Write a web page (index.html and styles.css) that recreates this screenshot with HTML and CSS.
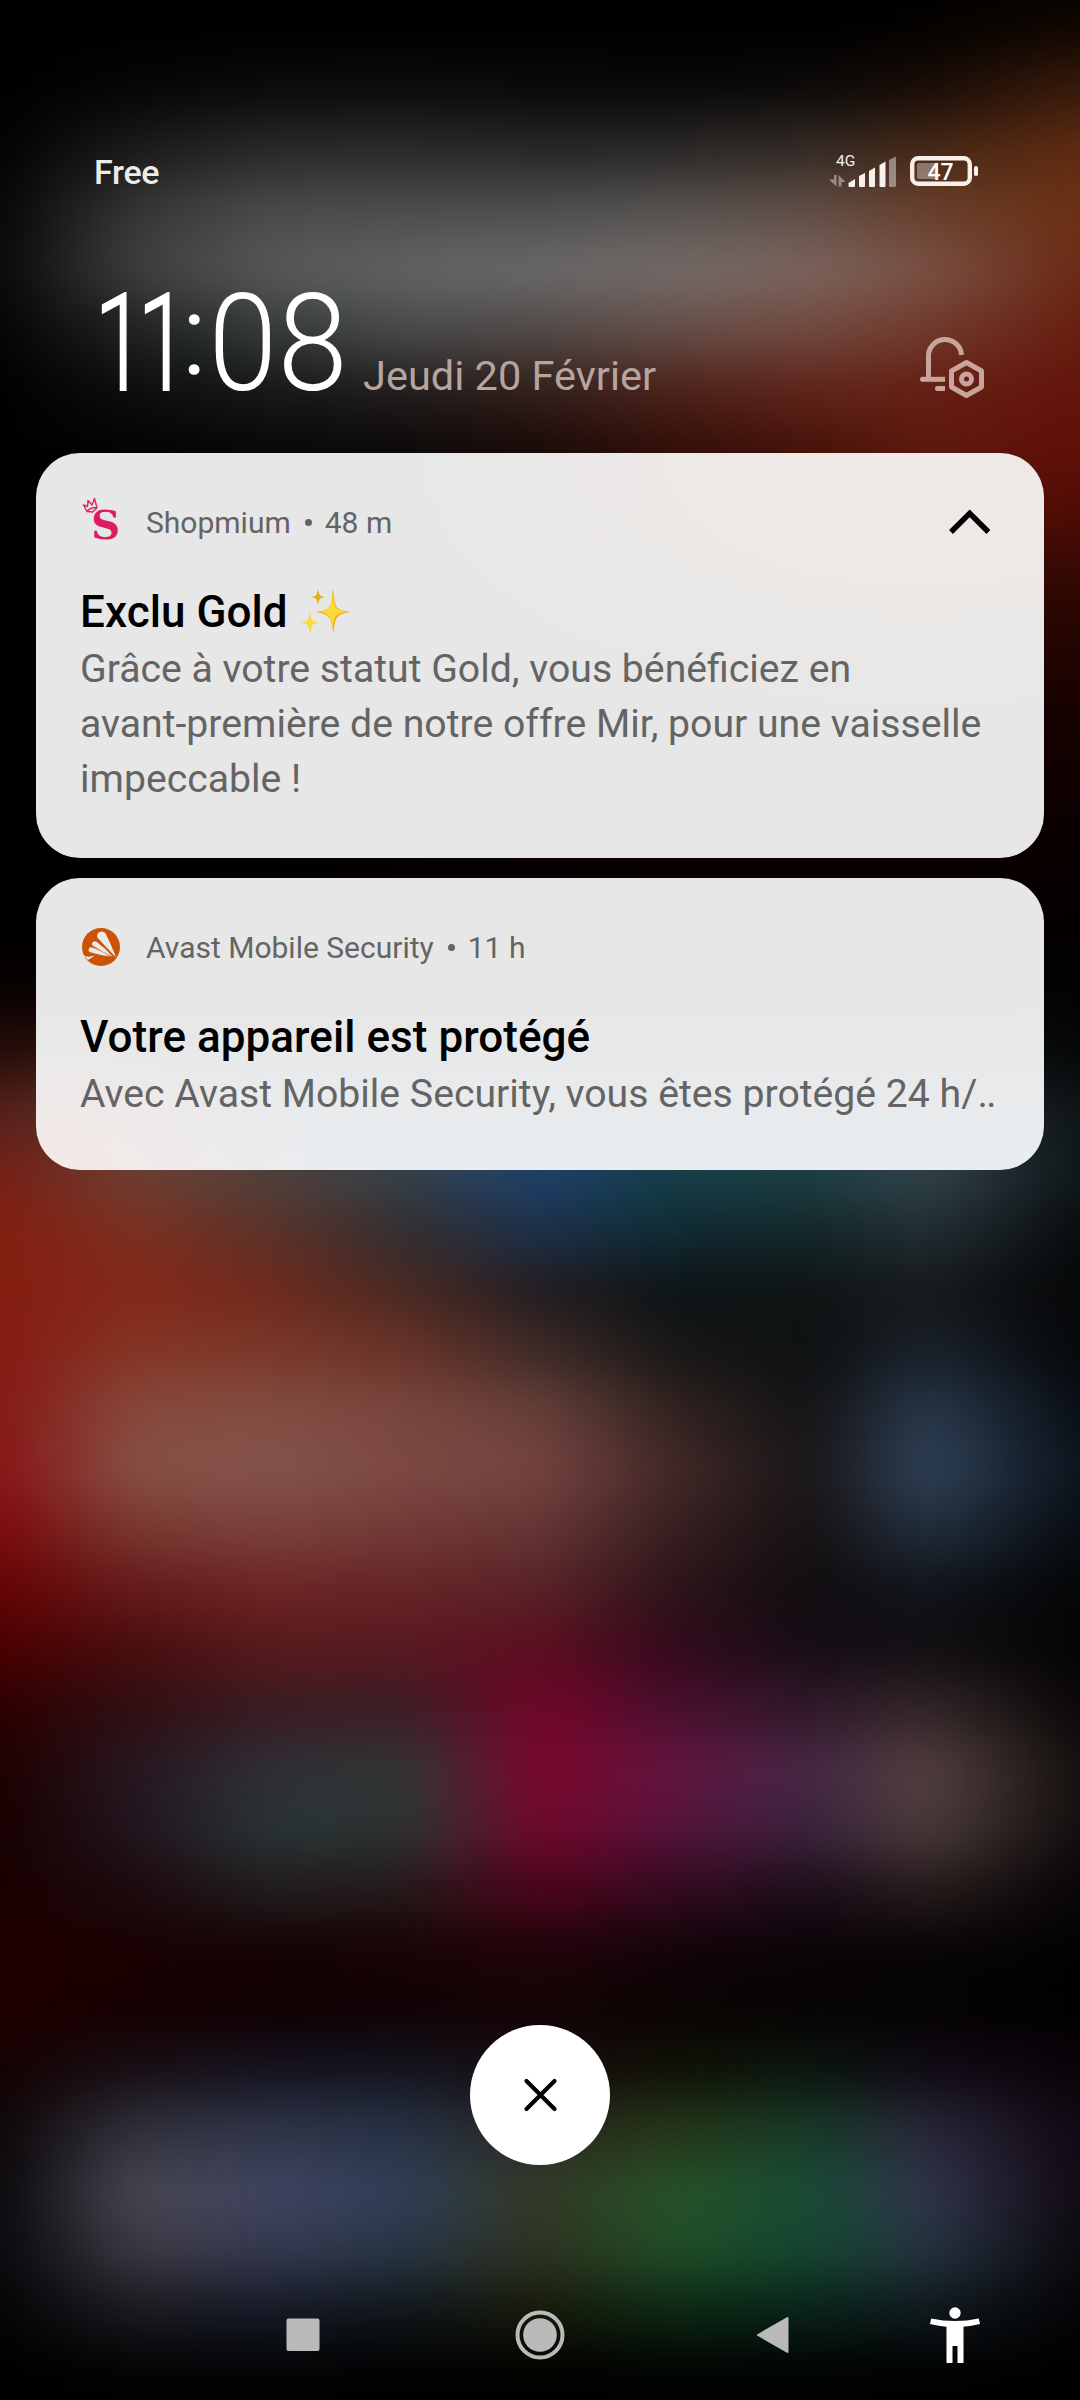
FILE: index.html
```html
<!DOCTYPE html>
<html lang="fr">
<head>
<meta charset="utf-8">
<title>Notifications</title>
<link rel="stylesheet" href="styles.css">
</head>
<body>
<div class="wallpaper">
<i class="b1"></i><i class="b2"></i><i class="b3"></i><i class="b4"></i><i class="b5"></i><i class="b6"></i><i class="b7"></i><i class="b8"></i><i class="b9"></i><i class="b10"></i><i class="b11"></i><i class="b12"></i><i class="b13"></i><i class="b14"></i><i class="b15"></i><i class="b16"></i><i class="b17"></i><i class="b18"></i><i class="b19"></i><i class="b20"></i><i class="b21"></i><i class="b22"></i><i class="b23"></i><i class="b24"></i><i class="b25"></i><i class="b26"></i><i class="b27"></i><i class="b28"></i><i class="b29"></i><i class="b30"></i><i class="b31"></i><i class="b32"></i><i class="b33"></i><i class="b34"></i><i class="b35"></i><i class="b36"></i><i class="b37"></i><i class="b38"></i><i class="b39"></i><i class="b40"></i>
</div>
<div class="screen">
  <header class="status">
    <span class="carrier">Free</span>
    <svg class="signals" width="154" height="40" viewBox="826 151 154 40">
      <text x="836" y="165.500" class="net">4G</text>
      <g fill="#fff" fill-opacity=".42">
        <path d="M834 175h2.500v11.500l-7.500-7h5zM838.500 175l7 7h-4v4.500h-3z"/>
        <path d="M889 160l7-3.500v29q0 1.500-1.500 1.500h-4q-1.500 0-1.500-1.500z"/>
      </g>
      <g fill="#f7f0ec">
        <path d="M848.500 183q3-2 6.500-4v7q0 1-1 1h-4.500q-1 0-1-1z"/>
        <path d="M859 176l6-3v13q0 1-1 1h-4q-1 0-1-1z"/>
        <path d="M869 171l6-3.500v18.500q0 1-1 1h-4q-1 0-1-1z"/>
        <path d="M879.500 165l6-3.500v24.500q0 1-1 1h-4q-1 0-1-1z"/>
        <rect x="974" y="166" width="4" height="10" rx="1.800"/>
      </g>
      <rect x="912.200" y="158.200" width="57.600" height="25.600" rx="6" fill="none" stroke="#f9efe9" stroke-width="4.400"/>
      <rect x="917" y="163" width="20" height="16" rx="2" fill="#fff" fill-opacity=".35"/>
      <text x="927.500" y="179.800" class="pct">47</text>
    </svg>
  </header>
  <section class="clock-row">
    <svg class="clock" width="254" height="130" viewBox="96 276 254 130">
      <text class="thick" transform="translate(94.500 390) scale(.68 1)">1</text>
      <text class="thick" transform="translate(137.500 390) scale(.68 1)">1</text>
      <text class="colon" x="182.500" y="374">:</text>
      <text transform="translate(208.500 390) scale(.91 1)">0</text>
      <text transform="translate(277.500 390) scale(.93 1)">8</text>
    </svg>
    <span class="date">Jeudi 20 Février</span>
    <svg class="bell" width="66" height="66" viewBox="30 15 66 66" fill="none" stroke="#c9a49d" stroke-width="5">
      <path d="M38.500 58V37a16.500 16.500 0 0 1 33-2"/>
      <path d="M32.500 59.300H55" /><circle cx="32.500" cy="59.300" r="2.500" fill="#c9a49d" stroke="none"/>
      <path d="M47.500 68.500H55"/><circle cx="47.500" cy="68.500" r="2.500" fill="#c9a49d" stroke="none"/>
      <path d="M76.500 42.500l15 8.500v16l-15 8.500-15-8.500v-16z" stroke-linejoin="round"/>
      <circle cx="76.500" cy="59" r="5"/>
    </svg>
  </section>

  <main class="cards">
    <article class="card first">
      <div class="head">
        <svg width="42" height="48" viewBox="0 0 42 48">
          <text x="11.300" y="41.500" class="logo-s">S</text>
          <path d="M7 14.500L3.500 8l4 1.500.5-6 4 4.500 2.500-6.500 2.500 9.500-4.500 4zM7 14.500q2-3.500 9-4" fill="none" stroke="#dc2468" stroke-width="1.400" stroke-linejoin="round"/>
        </svg>
        <span class="app">Shopmium</span><span class="dot"></span><span class="app">48 m</span>
        <svg class="chevron" width="46" height="30" viewBox="947 508 46 30"><path d="M951 533l18.700-18.700L988.400 533" fill="none" stroke="#000" stroke-width="5.500"/></svg>
      </div>
      <h2>Exclu Gold
        <svg class="sparkles" width="50" height="48" viewBox="0 0 50 48">
          <defs><radialGradient id="g"><stop offset="0" stop-color="#ffdd38"/><stop offset=".65" stop-color="#fdd52f"/><stop offset="1" stop-color="#f2b818"/></radialGradient></defs>
          <path fill="#ecae1c" d="M33 1.500q1.500 16 4 19 3 3.500 13 4.500-10 1.500-13 5.500-2.500 3-3.500 16-2-13-4.500-16-3-4-12.500-5.500 9.500-1 12.500-4.500 2.500-3 4-19z"/>
          <path fill="url(#g)" d="M32.500 3q1.500 15 3.500 18 3 3 12 3.500-9.500 1.500-12.500 5-2 3-2.500 14-1.500-11-4-14-3-4-11-5 8-1 11-4 2.500-3 3.500-17.500z"/>
          <path fill="#eab010" d="M18 1.500q1 6 2.200 7 1.300 1 5 1.500-3.700.5-5 1.500-1.200 1-2.200 7-1-6-2.200-7-1.300-1-5-1.500 3.700-.5 5-1.500 1.200-1 2.200-7z"/>
          <path fill="url(#g)" d="M10 24q1 8.500 2.500 9.500 1.500 1.500 7.500 2.500-6 .5-7.500 2-1.500 1.500-2 8-2-6.500-3-8Q6 36.500.5 35.500q5.500-.5 7-2Q9 32.500 10 24z"/>
        </svg>
      </h2>
      <p class="body">Grâce à votre statut Gold, vous bénéficiez en<br>avant-première de notre offre Mir, pour une vaisselle<br>impeccable !</p>
    </article>

    <article class="card second">
      <div class="head">
        <svg width="42" height="48" viewBox="0 0 42 48">
          <circle cx="21" cy="25" r="19" fill="#cb5308"/>
          <path fill="#ece9e6" d="M17.300 15.500a4.700 4.700 0 0 1 8.200-4.200Q31 22 36 35.500 27 26 17.300 15.500zM12.300 23.500a2.900 2.900 0 0 1 4.200-3.700Q25 26 33 35q-10-5-20.700-11.500zM9.500 30a2.600 2.600 0 0 1 2.700-4.400Q20 28 30 34.500 19 33 9.500 30zM3.500 33q3.500 3 11.500.5-3 2-7 4.500z"/>
        </svg>
        <span class="app">Avast Mobile Security</span><span class="dot"></span><span class="app">11 h</span>
      </div>
      <h2>Votre appareil est protégé</h2>
      <p class="body">Avec Avast Mobile Security, vous êtes protégé 24 h/<span class="dots">..</span></p>
    </article>
  </main>

  <button class="clear" aria-label="Effacer">
    <svg width="40" height="40" viewBox="0 0 40 40"><path d="M6.500 6l28 28M34.500 6l-28 28" stroke="#000" stroke-width="4.200" stroke-linecap="round"/></svg>
  </button>

  <nav class="nav">
    <svg width="34" height="34"><rect x=".5" y=".5" width="33" height="32.500" rx="2" fill="#b9bab9"/></svg>
    <svg width="50" height="50"><circle cx="25" cy="25" r="22.500" fill="none" stroke="#b9bab9" stroke-width="4"/><circle cx="25" cy="25" r="16.800" fill="#b9bab9"/></svg>
    <svg class="back" width="34" height="38"><path d="M2 19L31.500 2v34z" fill="#b9bab9" stroke="#b9bab9" stroke-width="2" stroke-linejoin="round"/></svg>
    <svg width="50" height="57" viewBox="930 2307 50 57" fill="#fff"><circle cx="955" cy="2313" r="5.700"/><path d="M931.200 2318.500q23.800 5 47.600 0l1.200 5.500q-9 2-16.500 2.700v36.300h-6v-17h-5v17h-6v-36.300q-7.500-.7-16.500-2.700z"/></svg>
  </nav>
</div>
</body>
</html>
```

FILE: styles.css
```css
* { box-sizing: border-box; }
body { margin: 0; background: #000; font-family: Roboto, sans-serif; width: 1080px; height: 2400px; overflow: hidden; position: relative; }

/* Blurred wallpaper: stacked colour bands, softened together */
.wallpaper { position: absolute; inset: 0; display: flex; flex-direction: column; overflow: hidden; }
.wallpaper i { display: block; flex: 0 0 60px; margin: 0 -90px; }
.wallpaper { inset: 0 -90px; filter: blur(24px); }
.wallpaper i { margin: 0;
  background-image: linear-gradient(90deg, var(--a) 7.14%, var(--b) 17.86%, var(--c) 28.57%, var(--d) 39.29%, var(--f) 50%, var(--g) 60.71%, var(--h) 71.43%, var(--i) 80.8%, var(--j) 92.86%); }
.b1 { --a:#000; --b:#000; --c:#000; --d:#000; --f:#000; --g:#000; --h:#000; --i:#040200; --j:#120701; }
.b2 { --a:#000; --b:#060606; --c:#0b0b0b; --d:#0b0c0c; --f:#0a0a0a; --g:#090909; --h:#0c0a09; --i:#1a0d07; --j:#3a1b0b; }
.b3 { --a:#020202; --b:#1b1b1b; --c:#282928; --d:#292a2a; --f:#262727; --g:#2a2827; --h:#342b26; --i:#462817; --j:#602b10; }
.b4 { --a:#060606; --b:#363635; --c:#4a4b4a; --d:#4c4e4e; --f:#4e4f4f; --g:#575350; --h:#604e45; --i:#683f2c; --j:#6c3012; }
.b5 { --a:#080808; --b:#3d3f3e; --c:#575958; --d:#626464; --f:#6a6969; --g:#746b68; --h:#7c645d; --i:#7a5144; --j:#6b2a14; }
.b6 { --a:#040404; --b:#202322; --c:#363a3a; --d:#484a4a; --f:#514a48; --g:#644e48; --h:#71493f; --i:#703a2c; --j:#671e10; }
.b7 { --a:#000; --b:#0c0e0e; --c:#161818; --d:#221d1c; --f:#341f1b; --g:#4c2219; --h:#5f241a; --i:#661f13; --j:#64140a; }
.b8 { --a:#000; --b:#030303; --c:#080808; --d:#0d0909; --f:#1a0a08; --g:#320f09; --h:#46120a; --i:#5e190d; --j:#600f06; }
.b9 { --a:#000; --b:#000; --c:#000; --d:#050303; --f:#0a0302; --g:#200904; --h:#360d06; --i:#4b1108; --j:#520c04; }
.b10 { --a:#000; --b:#000; --c:#000; --d:#000; --f:#000; --g:#100301; --h:#200603; --i:#300a04; --j:#360903; }
.b11 { --a:#000; --b:#000; --c:#000; --d:#000; --f:#000; --g:#000; --h:#180402; --i:#250602; --j:#260601; }
.b12 { --a:#000; --b:#000; --c:#000; --d:#000; --f:#000; --g:#000; --h:#100200; --i:#1a0301; --j:#1a0300; }
.b13 { --a:#000; --b:#000; --c:#000; --d:#000; --f:#000; --g:#000; --h:#080000; --i:#100100; --j:#120100; }
.b14 { --a:#000; --b:#000; --c:#000; --d:#030000; --f:#060000; --g:#080000; --h:#080000; --i:#0c0000; --j:#0c0000; }
.b15 { --a:#000; --b:#000; --c:#010000; --d:#060000; --f:#080000; --g:#0a0000; --h:#0a0000; --i:#0a0000; --j:#080000; }
.b16 { --a:#010000; --b:#050000; --c:#060000; --d:#080000; --f:#080000; --g:#080000; --h:#080000; --i:#080000; --j:#040000; }
.b17 { --a:#060101; --b:#100303; --c:#100504; --d:#100808; --f:#101010; --g:#101010; --h:#0c0c0c; --i:#080808; --j:#020202; }
.b18 { --a:#240b07; --b:#34150f; --c:#301a16; --d:#201c1e; --f:#182028; --g:#142024; --h:#141c20; --i:#101618; --j:#050606; }
.b19 { --a:#54201a; --b:#603a30; --c:#503e38; --d:#343c44; --f:#204064; --g:#1c4050; --h:#203c44; --i:#28343a; --j:#0e1416; }
.b20 { --a:#741f15; --b:#6c4033; --c:#4e413c; --d:#34424a; --f:#1e426e; --g:#143f48; --h:#1c4144; --i:#34454e; --j:#0f1619; }
.b21 { --a:#821f10; --b:#7c3020; --c:#5a3229; --d:#322e30; --f:#1b304a; --g:#112b34; --h:#14272a; --i:#222e33; --j:#080c0e; }
.b22 { --a:#841d10; --b:#84291a; --c:#70291c; --d:#482922; --f:#221c20; --g:#0c1315; --h:#0f1414; --i:#171a1b; --j:#050607; }
.b23 { --a:#851a12; --b:#843524; --c:#7a3829; --d:#693328; --f:#3c2a26; --g:#171716; --h:#0e1011; --i:#19212b; --j:#06080b; }
.b24 { --a:#861815; --b:#86493c; --c:#824d42; --d:#79463d; --f:#673f39; --g:#30221f; --h:#131315; --i:#28384b; --j:#090e14; }
.b25 { --a:#881516; --b:#875045; --c:#84544c; --d:#7d4943; --f:#754340; --g:#422827; --h:#181618; --i:#304259; --j:#0c131c; }
.b26 { --a:#7c0a0c; --b:#783830; --c:#7a403b; --d:#713a36; --f:#653434; --g:#361f20; --h:#151112; --i:#222f3e; --j:#080c12; }
.b27 { --a:#640304; --b:#641a1a; --c:#6c2424; --d:#652426; --f:#582226; --g:#2c1319; --h:#100d10; --i:#10141b; --j:#040506; }
.b28 { --a:#480000; --b:#480d0e; --c:#57191b; --d:#571820; --f:#5e0c20; --g:#320a1c; --h:#160d15; --i:#120f12; --j:#040303; }
.b29 { --a:#2c0000; --b:#2e0f13; --c:#381c22; --d:#3a1e26; --f:#720528; --g:#4a0f2e; --h:#30192a; --i:#342729; --j:#0b0807; }
.b30 { --a:#1e0000; --b:#261720; --c:#2f2f37; --d:#303634; --f:#7c062c; --g:#621540; --h:#442845; --i:#54403f; --j:#14100f; }
.b31 { --a:#180000; --b:#21151e; --c:#293436; --d:#2c3331; --f:#70072a; --g:#54133a; --h:#38223c; --i:#4a3b3a; --j:#120d0d; }
.b32 { --a:#1a0000; --b:#1c0a0e; --c:#201c1d; --d:#241819; --f:#4c041a; --g:#330a20; --h:#1c0e1a; --i:#261b1b; --j:#080505; }
.b33 { --a:#200000; --b:#1a0102; --c:#150304; --d:#180305; --f:#20040a; --g:#120408; --h:#090408; --i:#080505; --j:#020101; }
.b34 { --a:#200000; --b:#160001; --c:#100001; --d:#100204; --f:#140406; --g:#0a0302; --h:#060303; --i:#050204; --j:#010001; }
.b35 { --a:#140202; --b:#170f14; --c:#141420; --d:#141520; --f:#150c0e; --g:#101206; --h:#0a160e; --i:#110b16; --j:#0a0309; }
.b36 { --a:#0c0608; --b:#31313c; --c:#2f3548; --d:#263144; --f:#28281f; --g:#253717; --h:#163a28; --i:#292739; --j:#110812; }
.b37 { --a:#0a080b; --b:#484752; --c:#404560; --d:#2f3e58; --f:#323926; --g:#265228; --h:#184c36; --i:#31334c; --j:#120a12; }
.b38 { --a:#09080b; --b:#3c3943; --c:#353950; --d:#273544; --f:#2e3220; --g:#1f4e26; --h:#144630; --i:#253340; --j:#0b090e; }
.b39 { --a:#040406; --b:#1b1a20; --c:#151a26; --d:#10161a; --f:#171a0a; --g:#0c2813; --h:#082319; --i:#10181d; --j:#040406; }
.b40 { --a:#000; --b:#030304; --c:#020304; --d:#010202; --f:#020200; --g:#010301; --h:#010302; --i:#010202; --j:#000; }

.screen { position: relative; display: flex; flex-direction: column; height: 2400px; }

.status { height: 202px; padding: 140px 100px 0 94px; display: flex; justify-content: space-between; align-items: center; }
.carrier { font-size: 34px; font-weight: 500; color: #ececec; line-height: 40px; letter-spacing: -.3px; padding-top: 2px; }
.net { font: 400 15.500px Roboto, sans-serif; fill: #f2eeec; }
.pct { font: 500 23px Roboto, sans-serif; fill: #fff; }

.clock-row { height: 251px; padding: 68px 94px 0 96px; display: flex; align-items: flex-start; }
.clock { margin-top: 6px; overflow: visible; font: 300 136px Roboto, sans-serif; fill: #fff; }
.thick { stroke: #fff; stroke-width: 2px; }
.colon { font-size: 112px; stroke: #fff; stroke-width: 1.500px; }
.date { margin-top: 81px; margin-left: 13px; font-size: 41.500px; line-height: 50px; color: #b5a5a0; white-space: nowrap; }
.bell { margin-left: auto; margin-top: 65px; }

.cards { padding: 0 36px; display: flex; flex-direction: column; gap: 20px; }
.card { border-radius: 44px; padding: 44px 44px 0; }
.first { height: 405px; background: radial-gradient(ellipse 520px 260px at 88% 0, #f1eae6, rgba(240,233,230,0)), #e7e7e7; }
.second { height: 292px; background: radial-gradient(ellipse 300px 150px at 0 100%, #f4e9e6, rgba(244,233,230,0)), linear-gradient(#e7e7e7 45%, #e9edf0); }
.head { display: flex; align-items: center; height: 48px; margin-bottom: 38px; }
.app { font-size: 30px; line-height: 48px; color: #646464; padding-top: 3px; }
.head > svg:first-child { margin-right: 24px; overflow: visible; }
.dot { width: 7px; height: 7px; border-radius: 50%; background: #646464; margin: 2px 13px 0 14px; }
.chevron { margin-left: auto; margin-right: 7px; margin-top: 2px; }
.logo-s { font: 700 40px "DejaVu Serif", serif; fill: #dd1b62; }
h2 { margin: 0; font-size: 44px; font-weight: 500; line-height: 58px; height: 58px; color: #000; display: flex; white-space: nowrap; letter-spacing: .05px; }
.sparkles { margin: 4px 0 0 12px; }
.body { margin: 0; padding-top: 1px; font-size: 39.200px; line-height: 55px; color: #646464; white-space: nowrap; }
.dots { letter-spacing: -1.500px; }

.clear { align-self: center; margin-top: 855px; width: 140px; height: 140px; border: 0; border-radius: 50%; background: #fff; padding: 0; display: flex; align-items: center; justify-content: center; }
.nav { display: grid; grid-template-columns: 237px 237px 237px 120px; padding-left: 184px; height: 58px; margin-top: 141px; align-items: center; justify-items: center; }
.back { margin-right: 7px; }
```
